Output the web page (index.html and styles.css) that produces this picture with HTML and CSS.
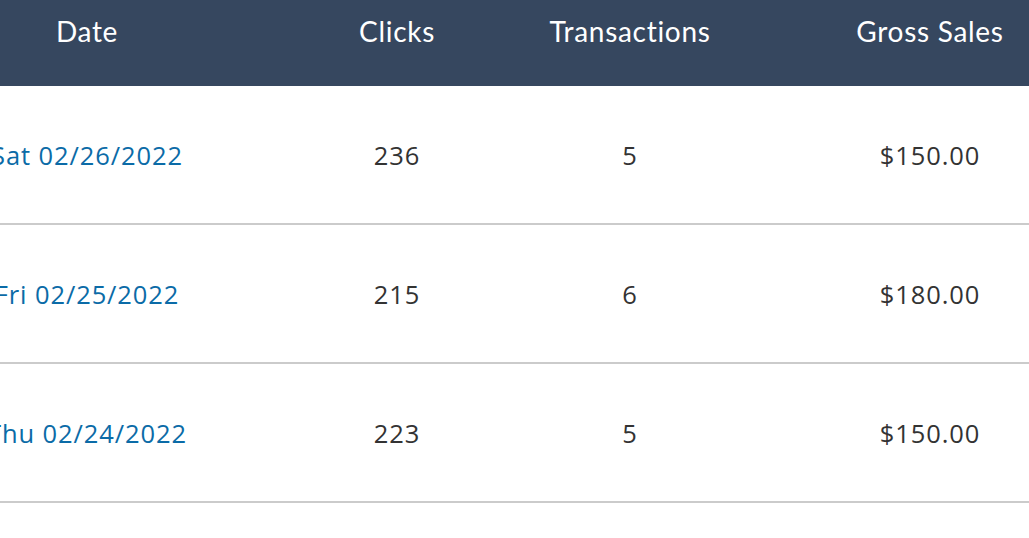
FILE: index.html
```html
<!DOCTYPE html>
<html lang="en">
<head>
<meta charset="utf-8">
<title>Daily Stats</title>
<link rel="stylesheet" href="styles.css">
</head>
<body>
<div class="viewport">
  <div class="stats">
    <div class="row head">
      <div class="cell">Date</div>
      <div class="cell">Clicks</div>
      <div class="cell">Transactions</div>
      <div class="cell">Gross Sales</div>
    </div>
    <div class="row">
      <div class="cell"><a class="date" href="#">Sat 02/26/2022</a></div>
      <div class="cell">236</div>
      <div class="cell">5</div>
      <div class="cell">$150.00</div>
    </div>
    <div class="row">
      <div class="cell"><a class="date" href="#">Fri 02/25/2022</a></div>
      <div class="cell">215</div>
      <div class="cell">6</div>
      <div class="cell">$180.00</div>
    </div>
    <div class="row">
      <div class="cell"><a class="date" href="#">Thu 02/24/2022</a></div>
      <div class="cell">223</div>
      <div class="cell">5</div>
      <div class="cell">$150.00</div>
    </div>
  </div>
</div>
</body>
</html>
```
FILE: styles.css
```css
html, body {
  margin: 0;
  padding: 0;
  background: #ffffff;
  overflow: hidden;
}

.viewport {
  width: 1029px;
  height: 538px;
  overflow: hidden;
}

.stats {
  width: 1220px;
  margin-left: -100px;
  font-family: "Open Sans", "Liberation Sans", sans-serif;
  color: #333333;
}

.row {
  display: grid;
  grid-template-columns: 374px 246px 220px 380px;
  align-items: center;
  height: 137px;
  border-bottom: 2px solid #cbcbcb;
  font-size: 25.5px;
  letter-spacing: 0.9px;
}

.cell {
  text-align: center;
  white-space: nowrap;
}

.row.head {
  height: 86px;
  align-items: start;
  border-bottom: none;
  background: #36475f;
  color: #ffffff;
  font-family: "Lato", "Noto Sans", sans-serif;
  font-size: 28px;
  letter-spacing: 0.7px;
}

.row.head .cell {
  padding-top: 14px;
  line-height: 34px;
}

.date {
  color: #0b6ba7;
  text-decoration: none;
}
```
